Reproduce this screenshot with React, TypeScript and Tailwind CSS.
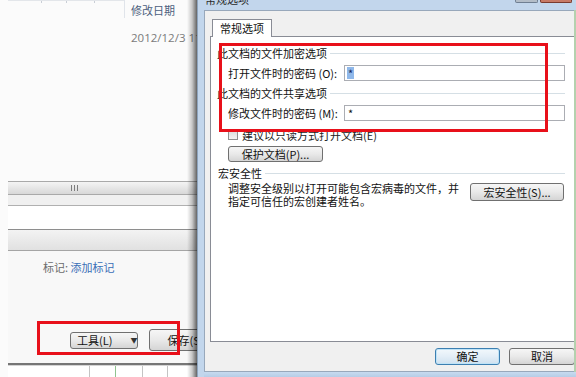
import React from "react";

function WinBtn({ children, className = "" }: { children: React.ReactNode; className?: string }) {
  return (
    <div
      className={`flex items-center justify-center border border-[#707070] rounded-[3px] bg-linear-to-b from-[#f6f6f6] via-[#e9e9e9] to-[#d5d5d5] text-[11px] leading-none text-[#111] whitespace-nowrap ${className}`}
    >
      {children}
    </div>
  );
}

function GroupHeader({ label, pl = "pl-[6px]" }: { label: string; pl?: string }) {
  return (
    <div className={`flex items-center h-[14px] ${pl} pr-[9px] gap-[3px]`}>
      <span className="leading-[14px] text-[#111] whitespace-nowrap">{label}</span>
      <div className="flex-1 h-px bg-[#d5dfe5]" />
    </div>
  );
}

export default function App() {
  return (
    <div className="relative flex w-[576px] h-[377px] overflow-hidden bg-white text-[11px] font-['Noto_Sans_CJK_SC','Microsoft_YaHei',sans-serif]">
      {/* Left explorer window */}
      <div className="relative flex w-[197px] h-full bg-[#fbfbfb] shrink-0 overflow-hidden">
        <div className="w-[8px] h-full shrink-0" />
        <div className="flex flex-col w-[189px] h-full">
          <div className="flex h-[18px] shrink-0">
            <div className="flex w-[116px] h-[3px] border-t border-[#e3e6ea]">
              <div className="w-[34px] border-r border-[#c9ced6]" />
              <div className="w-[25px] border-r border-[#c9ced6]" />
              <div className="w-[28px] border-r border-[#c9ced6]" />
            </div>
            <div className="w-px h-full bg-[#e0e4ea]" />
            <div className="pl-[6px] pt-[3px] leading-[14px] text-[#4c5f7d] whitespace-nowrap">修改日期</div>
          </div>
          <div className="h-[32px] shrink-0 pl-[123px] pt-[13px] leading-[14px] text-[#7a7a7a] whitespace-nowrap font-['Open_Sans',sans-serif] text-[11.5px]">
            2012/12/3 11:05
          </div>
          <div className="flex-1" />
          <div className="h-[14px] shrink-0 border-t border-b border-[#a9a9a9] bg-linear-to-b from-[#f4f4f4] to-[#d8d8d8] flex items-center pl-[63px] gap-[2px]">
            <div className="w-px h-[6px] bg-[#7d7d7d]" />
            <div className="w-px h-[6px] bg-[#7d7d7d]" />
            <div className="w-px h-[6px] bg-[#7d7d7d]" />
          </div>
          <div className="h-[10px] shrink-0 bg-[#f0f0f0]" />
          <div className="h-px shrink-0 bg-[#b0b0b0]" />
          <div className="h-[23px] shrink-0 bg-white" />
          <div className="h-px shrink-0 bg-[#8e8e8e]" />
          <div className="h-[20px] shrink-0 bg-linear-to-b from-[#f3f3f3] to-[#e1e1e1]" />
          <div className="h-px shrink-0 bg-[#a5a5a5]" />
          <div className="h-[112px] shrink-0 bg-[#f8f8f8] flex flex-col">
            <div className="pl-[35px] pt-[9px] leading-[14px] whitespace-nowrap">
              <span className="text-[#6b6b6b]">标记: </span>
              <span className="text-[#3a6fb7]">添加标记</span>
            </div>
            <div className="flex items-center h-[22px] mt-[55px] pl-[62px] gap-[11px]">
              <WinBtn className="w-[72px] h-[17px] gap-[18px] pl-[6px]">
                <span>工具(L)</span>
                <span className="text-[7px] text-[#333]">▼</span>
              </WinBtn>
              <WinBtn className="w-[60px] h-[22px] justify-start pl-[17px] shrink-0">保存(S)</WinBtn>
            </div>
          </div>
          <div className="h-[3px] shrink-0 border-t-2 border-[#767676] bg-[#d4d4d4]" />
          <div className="flex h-[11px] shrink-0 bg-white">
            <div className="w-[82px] border-r border-[#c4c4c4]" />
            <div className="w-[26px] border-r border-[#8fc48f]" />
            <div className="w-[27px] border-r border-[#c4c4c4]" />
            <div className="w-[25px] border-r border-[#c4c4c4]" />
          </div>
        </div>
        {/* dialog shadow */}
        <div className="absolute right-0 top-0 h-full w-[10px] bg-linear-to-r from-black/0 via-black/20 to-black/60" />
      </div>

      {/* Dialog */}
      <div className="flex flex-col w-[379px] h-full bg-[#c2d6ec] border-l border-[#8ea4bd] pl-[6px]">
        <div className="flex h-[10px] shrink-0 overflow-hidden pl-[1px]">
          <span className="-mt-[7px] leading-[13px] text-[#2a2a2a] whitespace-nowrap">常规选项</span>
          <div className="ml-auto mr-[4px] flex gap-[2px]">
            <div className="w-[23px] h-[3px] bg-[#b3bdc8] border-b border-x border-[#6f7f92] rounded-b-[2px]" />
            <div className="w-[32px] h-[3px] bg-[#c77a66] border-b border-x border-[#7a3b2e] rounded-b-[2px]" />
          </div>
        </div>
        <div className="flex h-[362px] shrink-0">
          <div className="flex flex-col w-[370px] h-full bg-[#f0f0f0] border-l border-t border-b border-[#98a8bb] overflow-hidden">
            <div className="pt-[7px] pl-[7px] h-[25px] shrink-0 flex items-end">
              <div className="relative z-10 w-[60px] h-[18px] -mb-px bg-white border border-b-0 border-[#898c95] flex items-center justify-center leading-none text-[#111]">
                常规选项
              </div>
            </div>
            <div className="ml-[5px] h-[306px] shrink-0 bg-white border-t border-l border-b border-[#898c95] flex flex-col pt-[9px]">
              <GroupHeader label="此文档的文件加密选项" />
              <div className="flex items-center mt-[5px] h-[16px] pl-[17px] pr-[9px]">
                <span className="w-[116px] shrink-0 leading-none whitespace-nowrap text-[#111]">打开文件时的密码 (O):</span>
                <div className="flex-1 h-[16px] border border-[#abadb3] bg-white flex items-center pl-[2px]">
                  <span className="bg-[#8fb8ea] text-[#1a2a5a] leading-[12px] px-[1px]">*</span>
                </div>
              </div>
              <div className="mt-[5px]">
                <GroupHeader label="此文档的文件共享选项" />
              </div>
              <div className="flex items-center mt-[5px] h-[16px] pl-[17px] pr-[9px]">
                <span className="w-[116px] shrink-0 leading-none whitespace-nowrap text-[#111]">修改文件时的密码 (M):</span>
                <div className="flex-1 h-[16px] border border-[#abadb3] bg-white flex items-center pl-[3px]">
                  <span className="text-[#111] leading-[12px]">*</span>
                </div>
              </div>
              <div className="flex items-center mt-[8px] h-[12px] pl-[17px] gap-[4px]">
                <div className="w-[10px] h-[10px] border border-[#8f8f8f] bg-linear-to-b from-[#dcdcdc] to-[#f4f4f4]" />
                <span className="leading-none whitespace-nowrap text-[#222]">建议以只读方式打开文档(E)</span>
              </div>
              <div className="flex mt-[5px] pl-[17px]">
                <WinBtn className="w-[95px] h-[16px]">保护文档(P)...</WinBtn>
              </div>
              <div className="mt-[4px]">
                <GroupHeader label="宏安全性" pl="pl-[7px]" />
              </div>
              <div className="flex items-start mt-[2px] pl-[17px] pr-[10px]">
                <div className="flex flex-col leading-[13px] text-[#111] whitespace-nowrap">
                  <span className="h-[13px]">调整安全级别以打开可能包含宏病毒的文件，并</span>
                  <span className="h-[13px]">指定可信任的宏创建者姓名。</span>
                </div>
                <WinBtn className="ml-auto mt-[1px] w-[94px] h-[18px]">宏安全性(S)...</WinBtn>
              </div>
            </div>
            <div className="flex pt-[6px] pl-[230px] gap-[9px]">
              <div className="flex items-center justify-center w-[65px] h-[17px] shrink-0 border border-[#3c7fb1] rounded-[3px] bg-linear-to-b from-[#f2f8fc] via-[#e3eef7] to-[#cfe1ef] leading-none text-[#111] shadow-[inset_0_0_0_1px_#bfe3f7]">
                确定
              </div>
              <WinBtn className="w-[66px] h-[17px] shrink-0">取消</WinBtn>
            </div>
          </div>
          <div className="w-[2px] h-full bg-[#b4d1ae]" />
        </div>
        <div className="flex-1 bg-linear-to-b from-[#c7dbf0] to-[#b6cde6]" />
      </div>

      {/* Red annotation boxes */}
      <div className="absolute left-[37px] top-[321px] w-[143px] h-[34px] border-[3px] border-[#e8101a]" />
      <div className="absolute left-[219px] top-[43px] w-[329px] h-[89px] border-[3px] border-[#e8101a]" />
    </div>
  );
}
